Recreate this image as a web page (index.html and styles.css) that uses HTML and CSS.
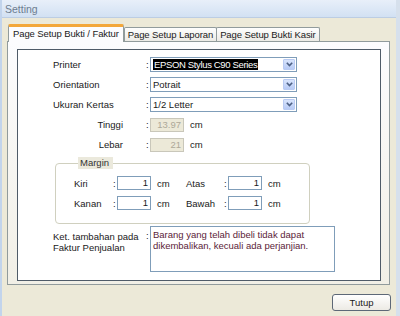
FILE: index.html
```html
<!DOCTYPE html>
<html lang="id">
<head>
  <meta charset="UTF-8">
  <meta name="viewport" content="width=device-width, initial-scale=1.0">
  <title>Setting</title>
  <link rel="stylesheet" href="styles.css">
</head>
<body>
  <div class="window">
    <!-- Title bar -->
    <div class="titlebar">Setting</div>

    <div class="content">
      <!-- Tabs -->
      <div class="tabs">
        <div class="tab active">Page Setup Bukti / Faktur</div>
        <div class="tab">Page Setup Laporan</div>
        <div class="tab">Page Setup Bukti Kasir</div>
      </div>

      <div class="panel">
        <div class="sheet">
          <div class="form">
            <div class="label">Printer</div>
            <div class="colon">:</div>
            <div class="select">
              <span class="value"><span class="picked">EPSON Stylus C90 Series</span></span>
              <span class="dropbtn"><svg width="7" height="5" viewBox="0 0 7 5"><path d="M0.8 0.8 L3.5 3.6 L6.2 0.8" fill="none" stroke="#4d6185" stroke-width="1.6"/></svg></span>
            </div>

            <div class="label">Orientation</div>
            <div class="colon">:</div>
            <div class="select">
              <span class="value">Potrait</span>
              <span class="dropbtn"><svg width="7" height="5" viewBox="0 0 7 5"><path d="M0.8 0.8 L3.5 3.6 L6.2 0.8" fill="none" stroke="#4d6185" stroke-width="1.6"/></svg></span>
            </div>

            <div class="label">Ukuran Kertas</div>
            <div class="colon">:</div>
            <div class="select">
              <span class="value">1/2 Letter</span>
              <span class="dropbtn"><svg width="7" height="5" viewBox="0 0 7 5"><path d="M0.8 0.8 L3.5 3.6 L6.2 0.8" fill="none" stroke="#4d6185" stroke-width="1.6"/></svg></span>
            </div>

            <div class="label sub">Tinggi</div>
            <div class="colon">:</div>
            <div class="unit-field"><span class="num disabled">13.97</span><span class="unit">cm</span></div>

            <div class="label sub">Lebar</div>
            <div class="colon">:</div>
            <div class="unit-field"><span class="num disabled">21</span><span class="unit">cm</span></div>
          </div>

          <fieldset class="margin-box">
            <legend>Margin</legend>
            <div class="margin-grid">
              <div class="mlabel">Kiri</div>
              <div class="mcolon">:</div>
              <div class="num">1</div>
              <div class="unit">cm</div>
              <div class="mlabel">Atas</div>
              <div class="mcolon">:</div>
              <div class="num">1</div>
              <div class="unit">cm</div>

              <div class="mlabel">Kanan</div>
              <div class="mcolon">:</div>
              <div class="num">1</div>
              <div class="unit">cm</div>
              <div class="mlabel">Bawah</div>
              <div class="mcolon">:</div>
              <div class="num">1</div>
              <div class="unit">cm</div>
            </div>
          </fieldset>

          <div class="note-row">
            <div class="label note-label">Ket. tambahan pada<br>Faktur Penjualan</div>
            <div class="colon">:</div>
            <div class="note">Barang yang telah dibeli tidak dapat<br>dikembalikan, kecuali ada perjanjian.</div>
          </div>
        </div>
      </div>

      <div class="footer">
        <button class="btn">Tutup</button>
      </div>
    </div>
  </div>
</body>
</html>
```

FILE: styles.css
```css
* {
  margin: 0;
  padding: 0;
  box-sizing: border-box;
}

body {
  font-family: "Liberation Sans", Arial, sans-serif;
  font-size: 9.5px;
  color: #1a1a1a;
  background: #ece9d8;
}

.window {
  width: 400px;
  height: 316px;
  display: flex;
  flex-direction: column;
  background: #ece9d8;
  border-left: 2px solid #c2d4ec;
  border-right: 4px solid #d6e0ec;
}

.titlebar {
  height: 18px;
  padding-left: 3px;
  line-height: 18px;
  font-size: 10.5px;
  color: #6d7d8f;
  background: linear-gradient(#e8eff9, #d2e1f3);
  border-bottom: 1px solid #bccde3;
}

.content {
  flex: 1;
  display: flex;
  flex-direction: column;
  padding: 6px 6px 5px 5px;
}

/* Tabs */
.tabs {
  display: flex;
  align-items: flex-end;
  height: 17px;
  padding-left: 1px;
}

.tab {
  height: 14px;
  padding: 0 3px;
  line-height: 13px;
  white-space: nowrap;
  letter-spacing: -0.1px;
  border: 1px solid #919b9c;
  border-bottom: none;
  border-radius: 2px 2px 0 0;
  background: linear-gradient(#fefefe, #ecebe6);
}

.tab + .tab {
  margin-left: -1px;
}

.tab.active {
  position: relative;
  z-index: 1;
  height: 18px;
  margin-bottom: -1px;
  padding: 0 4px;
  line-height: 14px;
  border-top: 3px solid #f3a73a;
  background: #fcfcfe;
}

.tab.active + .tab {
  margin-left: 0;
}

.panel {
  flex: 1;
  display: flex;
  padding: 7px 8px 3px 9px;
  border: 1px solid #919b9c;
  background: linear-gradient(#fcfcfe, #f1efe6);
}

.sheet {
  flex: 1;
  padding: 7px 0 0 35px;
  background: #fff;
  border: 1px solid #4f5b68;
}

/* Main form */
.form {
  display: grid;
  grid-template-columns: 93px 4px 147px;
  grid-auto-rows: 15px;
  row-gap: 5px;
  align-items: center;
}

.label {
  white-space: nowrap;
}

.label.sub {
  text-align: right;
  padding-right: 23px;
}

.colon {
  line-height: 15px;
}

.select {
  height: 15px;
  display: flex;
  align-items: stretch;
  padding: 1px;
  border: 1px solid #7f9db9;
  background: #fff;
}

.value {
  flex: 1;
  padding-left: 1px;
  line-height: 12px;
  white-space: nowrap;
}

.picked {
  background: #000;
  color: #fff;
  padding: 0 1px;
  letter-spacing: -0.35px;
}

.dropbtn {
  width: 12px;
  display: flex;
  align-items: center;
  justify-content: center;
  border: 1px solid #b9cbf3;
  border-radius: 1px;
  background: linear-gradient(#d8e4fc, #b8cbf6);
}

.unit-field {
  display: flex;
  align-items: center;
}

.num {
  width: 34px;
  height: 14px;
  padding-right: 2px;
  line-height: 12px;
  text-align: right;
  border: 1px solid #7f9db9;
  background: #fff;
}

.num.disabled {
  color: #aca899;
  border-color: #c9c7ba;
  background: #ece9d8;
}

.unit {
  padding-left: 6px;
}

/* Margin group */
.margin-box {
  width: 255px;
  margin: 5px 0 0 2px;
  padding: 7px 0 13px 18px;
  border: 1px solid #d0d0bf;
  border-radius: 4px;
}

.margin-box legend {
  margin-left: 4px;
  padding: 0 4px 0 2px;
  line-height: 12px;
  color: #333;
  background: #ebe9dc;
}

.margin-grid {
  display: grid;
  grid-template-columns: 39px 4px 34px 35px 38px 4px 34px 30px;
  grid-auto-rows: 14px;
  row-gap: 6px;
  align-items: center;
}

/* Note */
.note-row {
  display: grid;
  grid-template-columns: 93px 4px 185px;
  margin-top: 2px;
}

.note-label {
  padding-top: 5px;
  line-height: 11px;
}

.note-row .colon {
  padding-top: 4px;
  line-height: 11px;
}

.note {
  height: 46px;
  padding: 2px 2px;
  line-height: 11px;
  color: #5b2338;
  border: 1px solid #7f9db9;
  background: #fff;
}

/* Footer */
.footer {
  display: flex;
  justify-content: flex-end;
  padding-top: 9px;
  margin-right: -1px;
}

.btn {
  width: 59px;
  height: 17px;
  font-family: inherit;
  font-size: 9.5px;
  color: #1a1a1a;
  border: 1px solid #5d6877;
  border-radius: 3px;
  background: linear-gradient(#ffffff, #eceae4);
}
```
